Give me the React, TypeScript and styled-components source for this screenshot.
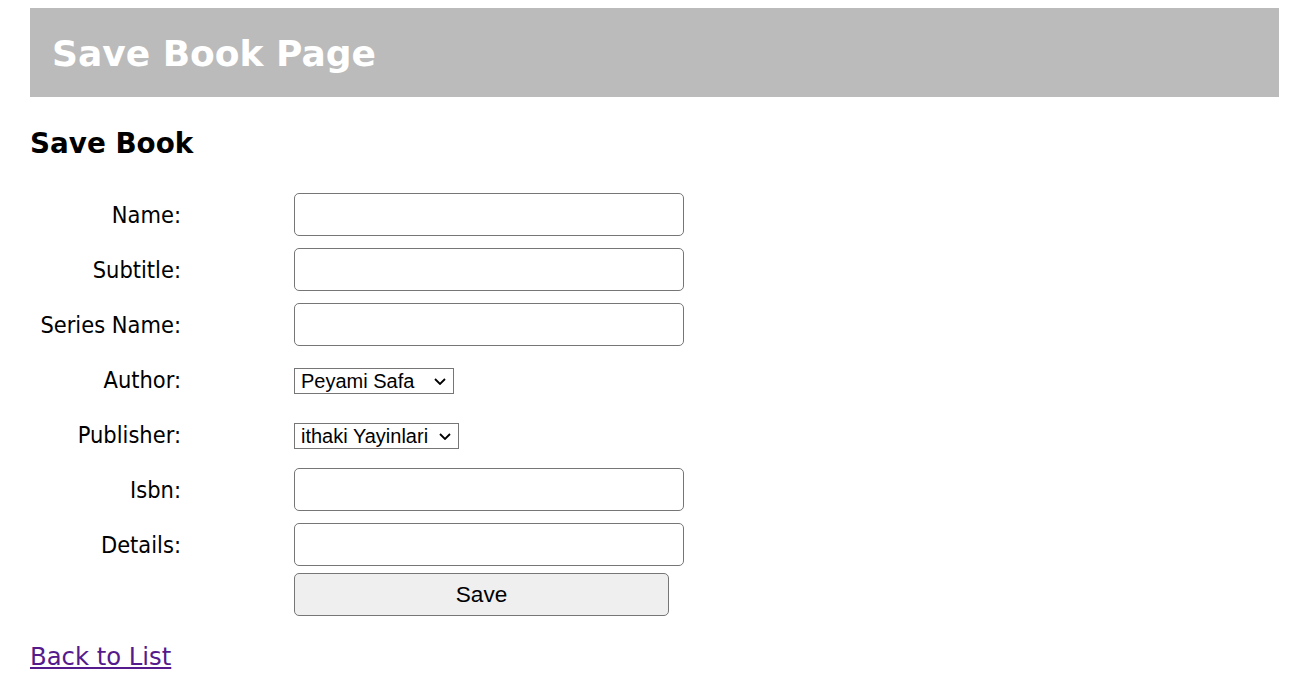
import React from "react";
import styled, { createGlobalStyle } from "styled-components";

const GlobalStyle = createGlobalStyle`
  html, body { margin: 0; padding: 0; background: #fff; }
  body { font-family: "DejaVu Sans", Verdana, sans-serif; color: #000; }
`;

const Page = styled.div`
  padding: 8px 15px 0 30px;
`;

const TitleBar = styled.header`
  height: 89px;
  background: #bbbbbb;
  display: flex;
  align-items: center;
  padding-left: 22px;
`;

const Title = styled.h1`
  margin: 2px 0 0 0;
  color: #fff;
  font-family: "DejaVu Sans", Verdana, sans-serif;
  font-weight: bold;
  font-size: 36px;
  line-height: 1;
`;

const SubTitle = styled.h2`
  margin: 31px 0 0 0;
  font-family: "DejaVu Sans", Verdana, sans-serif;
  font-weight: bold;
  font-size: 27.8px;
  line-height: 32px;
`;

const Form = styled.form`
  margin-top: 27px;
  display: grid;
  grid-template-columns: 151px 390px;
  column-gap: 113px;
  grid-auto-rows: 55px;
  align-items: center;
`;

const Label = styled.label`
  text-align: right;
  font-family: "DejaVu Sans Condensed", "DejaVu Sans", Tahoma, sans-serif;
  font-stretch: condensed;
  font-size: 23.4px;
`;

const TextInput = styled.input`
  box-sizing: border-box;
  width: 390px;
  height: 43px;
  border: 1px solid #767676;
  border-radius: 5px;
  background: #fff;
  padding: 2px 6px;
  font-family: "Liberation Sans", Arial, sans-serif;
  font-size: 20px;
`;

const SelectWrap = styled.div<{ $w: number }>`
  position: relative;
  width: ${(p) => p.$w}px;
  height: 26px;
  justify-self: start;
  margin-top: 2px;
`;

const Select = styled.select`
  box-sizing: border-box;
  appearance: none;
  -webkit-appearance: none;
  width: 100%;
  height: 26px;
  border: 1px solid #767676;
  border-radius: 0;
  background: #fff;
  color: #000;
  padding: 0 22px 0 6px;
  font-family: "Liberation Sans", Arial, sans-serif;
  font-size: 20px;
  line-height: 24px;
`;

const Chevron = styled.svg`
  position: absolute;
  right: 8px;
  top: 10px;
  width: 12px;
  height: 7px;
  pointer-events: none;
`;

const ButtonCell = styled.div`
  grid-column: 2;
  align-self: start;
  margin-top: 1px;
`;

const SaveButton = styled.button`
  box-sizing: border-box;
  width: 375px;
  height: 43px;
  border: 1px solid #767676;
  border-radius: 5px;
  background: #efefef;
  color: #000;
  font-family: "Liberation Sans", Arial, sans-serif;
  font-size: 22.6px;
`;

const BackLink = styled.a`
  display: inline-block;
  margin-top: 15px;
  color: #551a8b;
  font-family: "DejaVu Sans", Verdana, sans-serif;
  font-size: 24.3px;
  text-decoration: underline;
`;

type Field =
  | { label: string; kind: "text" }
  | { label: string; kind: "select"; value: string; width: number };

const fields: Field[] = [
  { label: "Name:", kind: "text" },
  { label: "Subtitle:", kind: "text" },
  { label: "Series Name:", kind: "text" },
  { label: "Author:", kind: "select", value: "Peyami Safa", width: 160 },
  { label: "Publisher:", kind: "select", value: "ithaki Yayinlari", width: 165 },
  { label: "Isbn:", kind: "text" },
  { label: "Details:", kind: "text" },
];

export default function App() {
  return (
    <>
      <GlobalStyle />
      <Page>
        <TitleBar>
          <Title>Save Book Page</Title>
        </TitleBar>
        <SubTitle>Save Book</SubTitle>
        <Form onSubmit={(e) => e.preventDefault()}>
          {fields.map((f) => (
            <React.Fragment key={f.label}>
              <Label>{f.label}</Label>
              {f.kind === "text" ? (
                <TextInput type="text" />
              ) : (
                <SelectWrap $w={f.width}>
                  <Select defaultValue={f.value}>
                    <option value={f.value}>{f.value}</option>
                  </Select>
                  <Chevron viewBox="0 0 12 7">
                    <path d="M1 1 L6 6 L11 1" fill="none" stroke="#000" strokeWidth="1.8" />
                  </Chevron>
                </SelectWrap>
              )}
            </React.Fragment>
          ))}
          <ButtonCell>
            <SaveButton type="submit">Save</SaveButton>
          </ButtonCell>
        </Form>
        <BackLink href="#">Back to List</BackLink>
      </Page>
    </>
  );
}
